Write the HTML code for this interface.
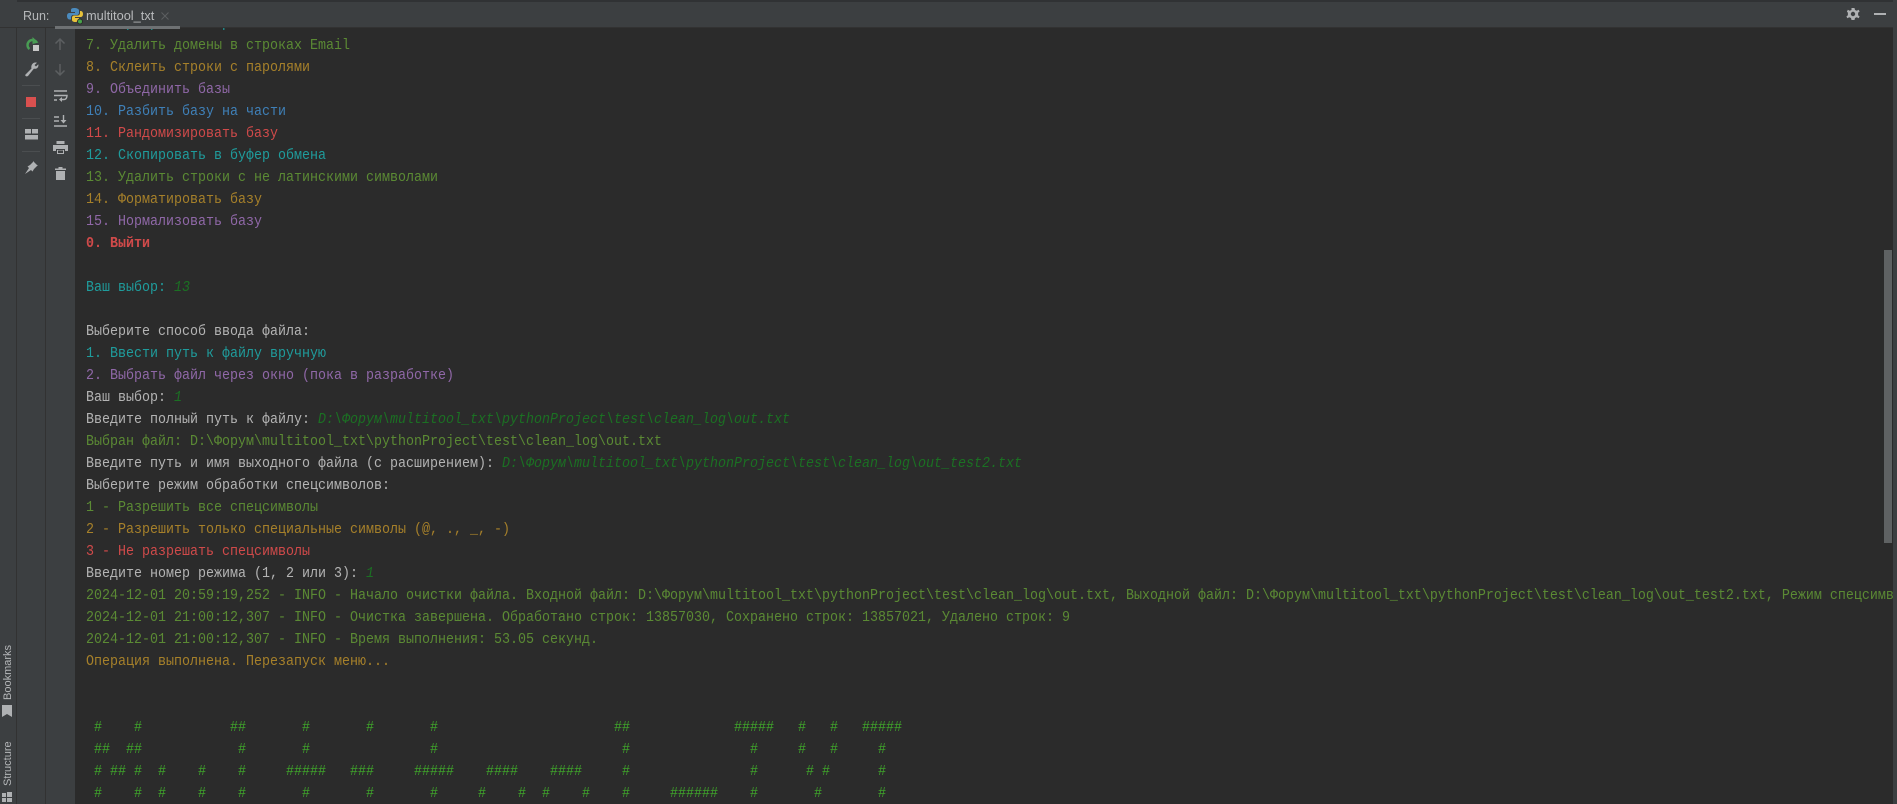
<!DOCTYPE html>
<html><head><meta charset="utf-8"><style>
html,body{margin:0;padding:0;background:#2b2b2b;width:1897px;height:804px;overflow:hidden}
.a{position:absolute}
#c{position:absolute;left:86px;top:0;width:1807px;height:804px;overflow:hidden}
.l{position:absolute;left:0;height:22px;white-space:pre;font:14.8px/22px "Liberation Mono","DejaVu Sans Mono",monospace;transform:scaleX(.9009);transform-origin:0 0;color:#b4b4b4}
.g{color:#5b8a34}.y{color:#a6802a}.p{color:#9068a8}.b{color:#3f80b8}.r{color:#d04a4a}.t{color:#1f9c9c}
.i{color:#1b7023;font-style:italic}.h{color:#3fa32b}
.ui{font-family:"Liberation Sans",sans-serif;color:#b5b7b9}
</style></head><body>
<div class="a" style="left:0;top:28px;width:16px;height:776px;background:#3c3f41"></div>
<div class="a" style="left:16px;top:0;width:1px;height:804px;background:#323232"></div>
<div class="a" style="left:17px;top:28px;width:28px;height:776px;background:#3c3f41"></div>
<div class="a" style="left:45px;top:28px;width:1px;height:776px;background:#323232"></div>
<div class="a" style="left:46px;top:28px;width:29px;height:776px;background:#3c3f41"></div>
<div id="c">
<div class="l" style="top:13px"><span class="t">6. Сортировать строки</span></div>
<div class="l" style="top:35px"><span class="g">7. Удалить домены в строках Email</span></div>
<div class="l" style="top:57px"><span class="y">8. Склеить строки с паролями</span></div>
<div class="l" style="top:79px"><span class="p">9. Объединить базы</span></div>
<div class="l" style="top:101px"><span class="b">10. Разбить базу на части</span></div>
<div class="l" style="top:123px"><span class="r">11. Рандомизировать базу</span></div>
<div class="l" style="top:145px"><span class="t">12. Скопировать в буфер обмена</span></div>
<div class="l" style="top:167px"><span class="g">13. Удалить строки с не латинскими символами</span></div>
<div class="l" style="top:189px"><span class="y">14. Форматировать базу</span></div>
<div class="l" style="top:211px"><span class="p">15. Нормализовать базу</span></div>
<div class="l" style="top:233px"><b class="r">0. Выйти</b></div>
<div class="l" style="top:277px"><span class="t">Ваш выбор: </span><span class="i">13</span></div>
<div class="l" style="top:321px">Выберите способ ввода файла:</div>
<div class="l" style="top:343px"><span class="t">1. Ввести путь к файлу вручную</span></div>
<div class="l" style="top:365px"><span class="p">2. Выбрать файл через окно (пока в разработке)</span></div>
<div class="l" style="top:387px">Ваш выбор: <span class="i">1</span></div>
<div class="l" style="top:409px">Введите полный путь к файлу: <span class="i">D:\Форум\multitool_txt\pythonProject\test\clean_log\out.txt</span></div>
<div class="l" style="top:431px"><span class="g">Выбран файл: D:\Форум\multitool_txt\pythonProject\test\clean_log\out.txt</span></div>
<div class="l" style="top:453px">Введите путь и имя выходного файла (с расширением): <span class="i">D:\Форум\multitool_txt\pythonProject\test\clean_log\out_test2.txt</span></div>
<div class="l" style="top:475px">Выберите режим обработки спецсимволов:</div>
<div class="l" style="top:497px"><span class="g">1 - Разрешить все спецсимволы</span></div>
<div class="l" style="top:519px"><span class="y">2 - Разрешить только специальные символы (@, ., _, -)</span></div>
<div class="l" style="top:541px"><span class="r">3 - Не разрешать спецсимволы</span></div>
<div class="l" style="top:563px">Введите номер режима (1, 2 или 3): <span class="i">1</span></div>
<div class="l" style="top:585px"><span class="g">2024-12-01 20:59:19,252 - INFO - Начало очистки файла. Входной файл: D:\Форум\multitool_txt\pythonProject\test\clean_log\out.txt, Выходной файл: D:\Форум\multitool_txt\pythonProject\test\clean_log\out_test2.txt, Режим спецсимволов: 1</span></div>
<div class="l" style="top:607px"><span class="g">2024-12-01 21:00:12,307 - INFO - Очистка завершена. Обработано строк: 13857030, Сохранено строк: 13857021, Удалено строк: 9</span></div>
<div class="l" style="top:629px"><span class="g">2024-12-01 21:00:12,307 - INFO - Время выполнения: 53.05 секунд.</span></div>
<div class="l" style="top:651px"><span class="y">Операция выполнена. Перезапуск меню...</span></div>
<div class="l h" style="top:717px"> #    #           ##       #       #       #                      ##             #####   #   #   #####</div>
<div class="l h" style="top:739px"> ##  ##            #       #               #                       #               #     #   #     #</div>
<div class="l h" style="top:761px"> # ## #  #    #    #     #####   ###     #####    ####    ####     #               #      # #      #</div>
<div class="l h" style="top:783px"> #    #  #    #    #       #       #       #     #    #  #    #    #     ######    #       #       #</div>
</div>
<!-- tab bar over console -->
<div class="a" style="left:0;top:0;width:1897px;height:28px;background:#3c3f41;border-bottom:1px solid #323232;box-sizing:border-box"></div>
<div class="a" style="left:17px;top:0;width:1880px;height:2px;background:#303234"></div>
<div class="a" style="left:55px;top:26px;width:125px;height:3px;background:#6e7173"></div>
<div class="a ui" style="left:23px;top:8px;font-size:12.500px;line-height:16px">Run:</div>
<svg class="a" style="left:66px;top:7px" width="18" height="18" viewBox="0 0 18 18">
<path d="M8 1C5 1 5 2.500 5 3.500V5H9V6H3.500C2 6 1 7 1 9s1 3.500 2.500 3.500H5V10.500C5 9 6 8 7.500 8H11c1 0 2-1 2-2V3.500C13 2 11 1 8 1z" fill="#4b8bbe"/>
<path d="M9.500 15c3 0 3.500-1.500 3.500-2.500V11H9v-1h5.500c1.500 0 2.500-1 2.500-3s-1-3-2.500-3H14v2c0 1.500-1 2.500-2.500 2.500H8c-1 0-2 1-2 2v2.500C6 14 7 15 9.500 15z" fill="#e8c23a"/>
<circle cx="14" cy="14.500" r="3" fill="#2b2b2b"/><circle cx="14" cy="14.500" r="2" fill="#49a54b"/>
</svg>
<div class="a ui" style="left:86px;top:8px;font-size:12.800px;line-height:16px;color:#b8babc">multitool_txt</div>
<svg class="a" style="left:161px;top:12px" width="8" height="8" viewBox="0 0 8 8"><path d="M.5.500l7 7M7.500.500l-7 7" stroke="#5c5f61" stroke-width="1"/></svg>
<svg class="a" style="left:1846px;top:7px" width="14" height="14" viewBox="0 0 14 14"><path d="M5.500 1h3l.5 2 1.800.8 1.800-1 1 1.700-1.500 1.300v2.400l1.500 1.300-1 1.700-1.800-1-1.800.8-.5 2h-3l-.5-2-1.800-.8-1.800 1-1-1.700 1.500-1.300V5.800L.9 4.500l1-1.700 1.800 1 1.800-.8z" fill="#afb1b3"/><circle cx="7" cy="7" r="2.200" fill="#3c3f41"/></svg>
<div class="a" style="left:1874px;top:13px;width:12px;height:2px;background:#afb1b3"></div>
<!-- left toolbar 1 -->
<svg class="a" style="left:24px;top:36px" width="16" height="16" viewBox="0 0 16 16"><path d="M12.500 6A5 5 0 1 0 5.500 13" fill="none" stroke="#499c54" stroke-width="2.400"/><path d="M8.500 1v7l6-1.500z" fill="#499c54"/><rect x="9" y="9" width="6" height="6" fill="#c8c8c8"/></svg>
<svg class="a" style="left:24px;top:61px" width="16" height="16" viewBox="0 0 16 16"><path d="M1.500 13.500l6-6C6.800 5 8 2 11 1.500c1 0 2 .2 2 .2L10.500 4l1.500 1.500 2.300-2.300c.5 2-.5 4-2.500 4.500-1 .2-1.700 0-2 0L4 15c-1.500 1-3.500-.2-2.500-1.500z" fill="#afb1b3"/></svg>
<div class="a" style="left:22px;top:85px;width:18px;height:1px;background:#4b4e50"></div>
<div class="a" style="left:26px;top:97px;width:10px;height:10px;background:#d9504f"></div>
<div class="a" style="left:22px;top:118px;width:18px;height:1px;background:#4b4e50"></div>
<svg class="a" style="left:25px;top:129px" width="13" height="11" viewBox="0 0 13 11"><rect x="0" y="0" width="6" height="4.500" fill="#afb1b3"/><rect x="7" y="0" width="6" height="4.500" fill="#afb1b3"/><rect x="0" y="6" width="13" height="4.500" fill="#afb1b3"/></svg>
<div class="a" style="left:22px;top:151px;width:18px;height:1px;background:#4b4e50"></div>
<svg class="a" style="left:24px;top:160px" width="15" height="15" viewBox="0 0 15 15"><path d="M1 14l4-6-1.500-1.500L6 5l3-3V1l5 5h-1l-3 3-1.500 2.500L7 10z" fill="#afb1b3"/></svg>
<!-- left toolbar 2 -->
<svg class="a" style="left:53px;top:37px" width="14" height="14" viewBox="0 0 14 14"><path d="M7 13V2M2.500 6.500L7 2l4.500 4.500" fill="none" stroke="#5c5f61" stroke-width="1.500"/></svg>
<svg class="a" style="left:53px;top:63px" width="14" height="14" viewBox="0 0 14 14"><path d="M7 1v11M2.500 7.500L7 12l4.500-4.500" fill="none" stroke="#5c5f61" stroke-width="1.500"/></svg>
<svg class="a" style="left:53px;top:89px" width="15" height="14" viewBox="0 0 15 14"><path d="M1 2h13M1 6.500h13c0 0 0 4-3 4H7M1 11h3" fill="none" stroke="#afb1b3" stroke-width="1.400"/><path d="M9 8v5l-3-2.500z" fill="#afb1b3"/></svg>
<svg class="a" style="left:53px;top:114px" width="15" height="14" viewBox="0 0 15 14"><path d="M1 3h5M1 7h5M1 12h13M10.500 1v7" fill="none" stroke="#afb1b3" stroke-width="1.400"/><path d="M7.500 6h6l-3 3.500z" fill="#afb1b3"/></svg>
<svg class="a" style="left:53px;top:141px" width="15" height="14" viewBox="0 0 15 14"><path d="M3.500 0h8v3h-8zM0 4h15v6h-3V8H3v2H0zM4 9h7v4H4z" fill="#afb1b3"/><rect x="5" y="9.500" width="5" height="2.500" fill="#3c3f41"/></svg>
<svg class="a" style="left:55px;top:167px" width="11" height="13" viewBox="0 0 11 13"><path d="M3.500 0h4v1.500H11V3H0V1.500h3.500zM1 4h9v9H1z" fill="#afb1b3"/></svg>
<!-- bottom left vertical labels -->
<div class="a ui" style="left:1px;top:647px;width:14px;height:53px;font-size:11px;line-height:14px;writing-mode:vertical-rl;transform:rotate(180deg);white-space:nowrap;text-align:left">Bookmarks</div>
<svg class="a" style="left:2px;top:705px" width="10" height="12" viewBox="0 0 10 12"><path d="M0 0h10v12L5 9 0 12z" fill="#afb1b3"/></svg>
<div class="a ui" style="left:1px;top:740px;width:14px;height:46px;font-size:11px;line-height:14px;writing-mode:vertical-rl;transform:rotate(180deg);white-space:nowrap;text-align:left">Structure</div>
<svg class="a" style="left:2px;top:792px" width="10" height="11" viewBox="0 0 10 11"><rect x="0" y="1" width="4" height="4" fill="#afb1b3"/><rect x="5" y="0" width="5" height="5" fill="#afb1b3"/><rect x="0" y="6" width="4" height="4" fill="#afb1b3"/><rect x="5" y="6" width="5" height="4" fill="#afb1b3"/></svg>
<!-- scrollbar -->
<div class="a" style="left:1884px;top:250px;width:8px;height:293px;background:#5f6263"></div>
<div class="a" style="left:1893px;top:0;width:4px;height:804px;background:#3c3f41"></div>
</body></html>
